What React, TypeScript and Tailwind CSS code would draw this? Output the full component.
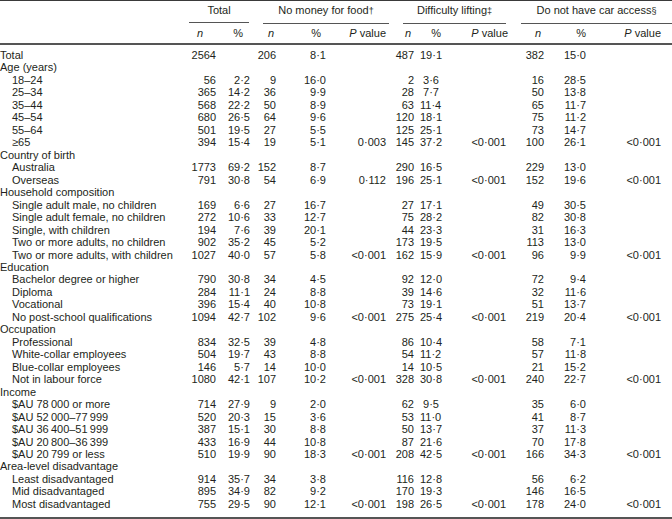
type Row = {
  label: string
  sub?: boolean
  v?: string[]
}

const E = ""
const LT = "<0·001"

const rows: Row[] = [
  { label: "Total", v: ["2564", E, "206", "8·1", E, "487", "19·1", E, "382", "15·0", E] },
  { label: "Age (years)" },
  { label: "18–24", sub: true, v: ["56", "2·2", "9", "16·0", E, "2", "3·6", E, "16", "28·5", E] },
  { label: "25–34", sub: true, v: ["365", "14·2", "36", "9·9", E, "28", "7·7", E, "50", "13·8", E] },
  { label: "35–44", sub: true, v: ["568", "22·2", "50", "8·9", E, "63", "11·4", E, "65", "11·7", E] },
  { label: "45–54", sub: true, v: ["680", "26·5", "64", "9·6", E, "120", "18·1", E, "75", "11·2", E] },
  { label: "55–64", sub: true, v: ["501", "19·5", "27", "5·5", E, "125", "25·1", E, "73", "14·7", E] },
  { label: "≥65", sub: true, v: ["394", "15·4", "19", "5·1", "0·003", "145", "37·2", LT, "100", "26·1", LT] },
  { label: "Country of birth" },
  { label: "Australia", sub: true, v: ["1773", "69·2", "152", "8·7", E, "290", "16·5", E, "229", "13·0", E] },
  { label: "Overseas", sub: true, v: ["791", "30·8", "54", "6·9", "0·112", "196", "25·1", LT, "152", "19·6", LT] },
  { label: "Household composition" },
  { label: "Single adult male, no children", sub: true, v: ["169", "6·6", "27", "16·7", E, "27", "17·1", E, "49", "30·5", E] },
  { label: "Single adult female, no children", sub: true, v: ["272", "10·6", "33", "12·7", E, "75", "28·2", E, "82", "30·8", E] },
  { label: "Single, with children", sub: true, v: ["194", "7·6", "39", "20·1", E, "44", "23·3", E, "31", "16·3", E] },
  { label: "Two or more adults, no children", sub: true, v: ["902", "35·2", "45", "5·2", E, "173", "19·5", E, "113", "13·0", E] },
  { label: "Two or more adults, with children", sub: true, v: ["1027", "40·0", "57", "5·8", LT, "162", "15·9", LT, "96", "9·9", LT] },
  { label: "Education" },
  { label: "Bachelor degree or higher", sub: true, v: ["790", "30·8", "34", "4·5", E, "92", "12·0", E, "72", "9·4", E] },
  { label: "Diploma", sub: true, v: ["284", "11·1", "24", "8·8", E, "39", "14·6", E, "32", "11·6", E] },
  { label: "Vocational", sub: true, v: ["396", "15·4", "40", "10·8", E, "73", "19·1", E, "51", "13·7", E] },
  { label: "No post-school qualifications", sub: true, v: ["1094", "42·7", "102", "9·6", LT, "275", "25·4", LT, "219", "20·4", LT] },
  { label: "Occupation" },
  { label: "Professional", sub: true, v: ["834", "32·5", "39", "4·8", E, "86", "10·4", E, "58", "7·1", E] },
  { label: "White-collar employees", sub: true, v: ["504", "19·7", "43", "8·8", E, "54", "11·2", E, "57", "11·8", E] },
  { label: "Blue-collar employees", sub: true, v: ["146", "5·7", "14", "10·0", E, "14", "10·5", E, "21", "15·2", E] },
  { label: "Not in labour force", sub: true, v: ["1080", "42·1", "107", "10·2", LT, "328", "30·8", LT, "240", "22·7", LT] },
  { label: "Income" },
  { label: "$AU 78\u2009000 or more", sub: true, v: ["714", "27·9", "9", "2·0", E, "62", "9·5", E, "35", "6·0", E] },
  { label: "$AU 52\u2009000–77\u2009999", sub: true, v: ["520", "20·3", "15", "3·6", E, "53", "11·0", E, "41", "8·7", E] },
  { label: "$AU 36\u2009400–51\u2009999", sub: true, v: ["387", "15·1", "30", "8·8", E, "50", "13·7", E, "37", "11·3", E] },
  { label: "$AU 20\u2009800–36\u2009399", sub: true, v: ["433", "16·9", "44", "10·8", E, "87", "21·6", E, "70", "17·8", E] },
  { label: "$AU 20\u2009799 or less", sub: true, v: ["510", "19·9", "90", "18·3", LT, "208", "42·5", LT, "166", "34·3", LT] },
  { label: "Area-level disadvantage" },
  { label: "Least disadvantaged", sub: true, v: ["914", "35·7", "34", "3·8", E, "116", "12·8", E, "56", "6·2", E] },
  { label: "Mid disadvantaged", sub: true, v: ["895", "34·9", "82", "9·2", E, "170", "19·3", E, "146", "16·5", E] },
  { label: "Most disadvantaged", sub: true, v: ["755", "29·5", "90", "12·1", LT, "198", "26·5", LT, "178", "24·0", LT] },
]

// shared column grid: label | Total n % | No money n % P | Lifting n % P | Car n % P
const GRID = "grid grid-cols-[180px_36px_40px_24px_50px_65px_25px_22px_72px_34px_42px_82px]"

// right padding of each numeric column (keeps numbers on their printed right edge)
const padR = [
  "pr-0",
  "pr-[6px]",
  "pr-[4px]",
  "pr-[4px]",
  "pr-[9px]",
  "pr-[6px]",
  "pr-[3px]",
  "pr-[8px]",
  "pr-[4px]",
  "pr-[4px]",
  "pr-[11px]",
]

function PValue() {
  return (
    <span>
      <span className="italic">P</span> value
    </span>
  )
}

export default function App() {
  return (
    <div className="w-[672px] h-[519px] flex flex-col bg-white text-[#231f20] font-['Liberation_Sans',Arial,sans-serif] text-[11px] border-t border-[#3a3a3a] overflow-hidden">
      {/* Group headings with their short rules */}
      <div className={`${GRID} h-[23px] items-start text-center`}>
        <div />
        <div className="col-span-2 ml-[9px] mr-[7px] pt-[3px] pb-[5px] leading-[13px] border-b border-[#555]">Total</div>
        <div className="col-span-3 ml-[7px] mr-[6px] pt-[3px] pb-[5px] leading-[13px] border-b border-[#555]">
          No money for food<span className="text-[9px]">†</span>
        </div>
        <div className="col-span-3 ml-[8px] mr-[8px] pt-[3px] pb-[5px] leading-[13px] border-b border-[#555]">
          Difficulty lifting<span className="text-[9px]">‡</span>
        </div>
        <div className="col-span-3 ml-[7px] pt-[3px] pb-[5px] leading-[13px] border-b border-[#555]">
          Do not have car access<span className="text-[9px]">§</span>
        </div>
      </div>

      {/* n / % / P value */}
      <div className={`${GRID} h-[21px] items-center text-right border-b-2 border-[#555]`}>
        <div />
        <div className="pr-[13px] italic">n</div>
        <div className="pr-[13px]">%</div>
        <div className="pr-[6px] italic">n</div>
        <div className="pr-[9px]">%</div>
        <div className="pr-[9px]">
          <PValue />
        </div>
        <div className="pr-[9px] italic">n</div>
        <div className="pr-[1px]">%</div>
        <div className="pr-[6px]">
          <PValue />
        </div>
        <div className="pr-[7px] italic">n</div>
        <div className="pr-[4px]">%</div>
        <div className="pr-[11px]">
          <PValue />
        </div>
      </div>

      {/* Body */}
      <div className="flex flex-col pt-[4px]">
        {rows.map((r) => (
          <div key={r.label} className={`${GRID} h-[12.47px] leading-[12.47px]`}>
            <div className={`whitespace-nowrap ${r.sub ? "pl-[12px]" : ""}`}>{r.label}</div>
            {r.v &&
              r.v.map((x, i) => (
                <div key={i} className={`text-right whitespace-nowrap ${padR[i]}`}>
                  {x}
                </div>
              ))}
          </div>
        ))}
      </div>

      <div className="mt-auto border-b-2 border-[#555]" />
    </div>
  )
}
